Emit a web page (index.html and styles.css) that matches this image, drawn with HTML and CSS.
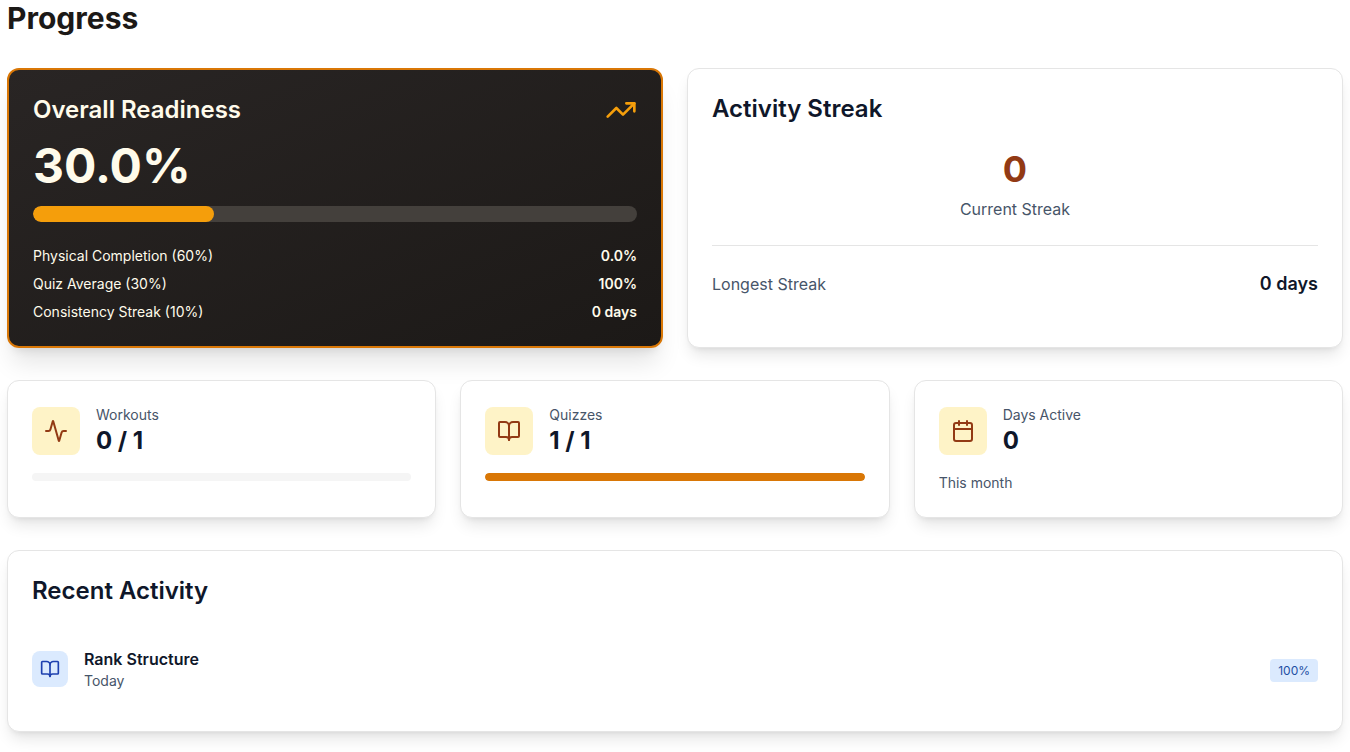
FILE: index.html
```html
<!DOCTYPE html>
<html lang="en">
<head>
<meta charset="utf-8">
<meta name="viewport" content="width=device-width, initial-scale=1">
<title>Progress</title>
<link rel="stylesheet" href="styles.css">
</head>
<body>
<main class="page">
  <h1 class="page-title">Progress</h1>

  <div class="grid grid-two">
    <section class="card card-dark">
      <div class="card-head">
        <h2 class="card-title">Overall Readiness</h2>
        <svg class="icon icon-lg" viewBox="0 0 24 24" aria-hidden="true"><path d="M22 7 13.5 15.5 8.5 10.5 2 17"/><path d="M16 7h6v6"/></svg>
      </div>
      <p class="readiness-value">30.0%</p>
      <div class="bar bar-lg"><div class="bar-fill" style="width: 30%"></div></div>
      <dl class="breakdown">
        <div class="line"><dt>Physical Completion (60%)</dt><dd>0.0%</dd></div>
        <div class="line"><dt>Quiz Average (30%)</dt><dd>100%</dd></div>
        <div class="line"><dt>Consistency Streak (10%)</dt><dd>0 days</dd></div>
      </dl>
    </section>

    <section class="card">
      <h2 class="card-title">Activity Streak</h2>
      <div class="streak">
        <p class="streak-value">0</p>
        <p class="streak-label">Current Streak</p>
      </div>
      <div class="line longest">
        <span class="muted">Longest Streak</span>
        <span class="longest-value">0 days</span>
      </div>
    </section>
  </div>

  <div class="grid grid-three">
    <section class="card">
      <div class="stat">
        <div class="tile"><svg class="icon" viewBox="0 0 24 24" aria-hidden="true"><path d="M22 12h-2.48a2 2 0 0 0-1.93 1.46l-2.35 8.36a.25.25 0 0 1-.48 0L9.24 2.18a.25.25 0 0 0-.48 0l-2.35 8.36A2 2 0 0 1 4.49 12H2"/></svg></div>
        <div><p class="small muted">Workouts</p><p class="stat-value">0 / 1</p></div>
      </div>
      <div class="bar"><div class="bar-fill" style="width: 0%"></div></div>
    </section>
    <section class="card">
      <div class="stat">
        <div class="tile"><svg class="icon" viewBox="0 0 24 24" aria-hidden="true"><path d="M12 7v14"/><path d="M3 18a1 1 0 0 1-1-1V4a1 1 0 0 1 1-1h5a4 4 0 0 1 4 4 4 4 0 0 1 4-4h5a1 1 0 0 1 1 1v13a1 1 0 0 1-1 1h-6a3 3 0 0 0-3 3 3 3 0 0 0-3-3z"/></svg></div>
        <div><p class="small muted">Quizzes</p><p class="stat-value">1 / 1</p></div>
      </div>
      <div class="bar"><div class="bar-fill" style="width: 100%"></div></div>
    </section>
    <section class="card">
      <div class="stat">
        <div class="tile"><svg class="icon" viewBox="0 0 24 24" aria-hidden="true"><path d="M8 2v4"/><path d="M16 2v4"/><rect x="3" y="4" width="18" height="18" rx="2"/><path d="M3 10h18"/></svg></div>
        <div><p class="small muted">Days Active</p><p class="stat-value">0</p></div>
      </div>
      <p class="small muted">This month</p>
    </section>
  </div>

  <section class="card">
    <h2 class="card-title">Recent Activity</h2>
    <ul class="activity">
      <li class="activity-item">
        <div class="tile tile-blue"><svg class="icon icon-sm" viewBox="0 0 24 24" aria-hidden="true"><path d="M12 7v14"/><path d="M3 18a1 1 0 0 1-1-1V4a1 1 0 0 1 1-1h5a4 4 0 0 1 4 4 4 4 0 0 1 4-4h5a1 1 0 0 1 1 1v13a1 1 0 0 1-1 1h-6a3 3 0 0 0-3 3 3 3 0 0 0-3-3z"/></svg></div>
        <div class="activity-text">
          <p class="activity-name">Rank Structure</p>
          <p class="small muted">Today</p>
        </div>
        <div><span class="badge">100%</span></div>
      </li>
    </ul>
  </section>
</main>
</body>
</html>
```
FILE: styles.css
```css
* {
  box-sizing: border-box;
}

body,
h1,
h2,
p,
dl,
dd,
ul {
  margin: 0;
  padding: 0;
}

body {
  background: #fff;
  color: #0f172a;
  font-family: Inter, "Liberation Sans", sans-serif;
  font-size: 16px;
  line-height: 24px;
}

.page {
  display: flex;
  flex-direction: column;
  gap: 32px;
  padding: 0 7px 20px;
}

.page-title {
  color: #1c1917;
  font-size: 30px;
  font-weight: 700;
  line-height: 36px;
}

.grid {
  display: grid;
  gap: 24px;
}

.grid-two {
  grid-template-columns: repeat(2, 1fr);
}

.grid-three {
  grid-template-columns: repeat(3, 1fr);
}

.card {
  padding: 24px;
  background: #fff;
  border: 1px solid #e5e5e5;
  border-radius: 12px;
  box-shadow: 0 10px 15px -3px rgba(0, 0, 0, 0.1), 0 4px 6px -4px rgba(0, 0, 0, 0.1);
}

.card-dark {
  background: linear-gradient(to bottom right, #292524, #1c1917);
  border: 2px solid #d97706;
  color: #fffbeb;
  box-shadow: 0 20px 25px -5px rgba(0, 0, 0, 0.1), 0 8px 10px -6px rgba(0, 0, 0, 0.1);
}

.card-head,
.line {
  display: flex;
  align-items: center;
  justify-content: space-between;
}

.card-title {
  font-size: 24px;
  font-weight: 600;
  line-height: 32px;
}

.icon {
  display: block;
  width: 24px;
  height: 24px;
  fill: none;
  stroke: currentColor;
  stroke-width: 2;
  stroke-linecap: round;
  stroke-linejoin: round;
}

.icon-lg {
  width: 32px;
  height: 32px;
  color: #f59e0b;
}

.icon-sm {
  width: 20px;
  height: 20px;
}

.readiness-value {
  margin: 16px 0;
  font-size: 48px;
  font-weight: 700;
  line-height: 48px;
}

.bar {
  height: 8px;
  overflow: hidden;
  background: #f5f5f5;
  border-radius: 8px;
}

.bar-fill {
  height: 100%;
  background: #d97706;
  border-radius: 8px;
}

.bar-lg {
  height: 16px;
  background: #44403c;
}

.bar-lg .bar-fill {
  background: #f59e0b;
}

.breakdown {
  display: grid;
  gap: 8px;
  margin-top: 24px;
  font-size: 14px;
  line-height: 20px;
}

.breakdown dd {
  font-weight: 600;
}

.streak {
  display: grid;
  gap: 8px;
  margin: 24px 0;
  text-align: center;
}

.streak-value {
  color: #923a14;
  font-size: 36px;
  font-weight: 700;
  line-height: 40px;
}

.streak-label,
.muted {
  color: #475569;
}

.longest {
  padding-top: 24px;
  border-top: 1px solid #e5e5e5;
}

.longest-value {
  font-size: 18px;
  font-weight: 600;
  line-height: 28px;
}

.stat {
  display: flex;
  align-items: center;
  gap: 16px;
  margin-bottom: 16px;
}

.tile {
  padding: 12px;
  background: #fef3c7;
  border-radius: 8px;
  color: #923a14;
}

.tile-blue {
  padding: 8px;
  background: #dbeafe;
  color: #1e40af;
}

.small {
  font-size: 14px;
  line-height: 20px;
}

.stat-value {
  font-size: 24px;
  font-weight: 700;
  line-height: 32px;
}

.activity {
  margin-top: 24px;
  list-style: none;
}

.activity-item {
  display: flex;
  align-items: center;
  gap: 16px;
  padding: 16px 0;
}

.activity-text {
  flex: 1;
}

.activity-name {
  font-weight: 600;
}

.badge {
  padding: 4px 8px;
  background: #dbeafe;
  border-radius: 4px;
  color: #1e4fa3;
  font-size: 12px;
  line-height: 16px;
}
```
